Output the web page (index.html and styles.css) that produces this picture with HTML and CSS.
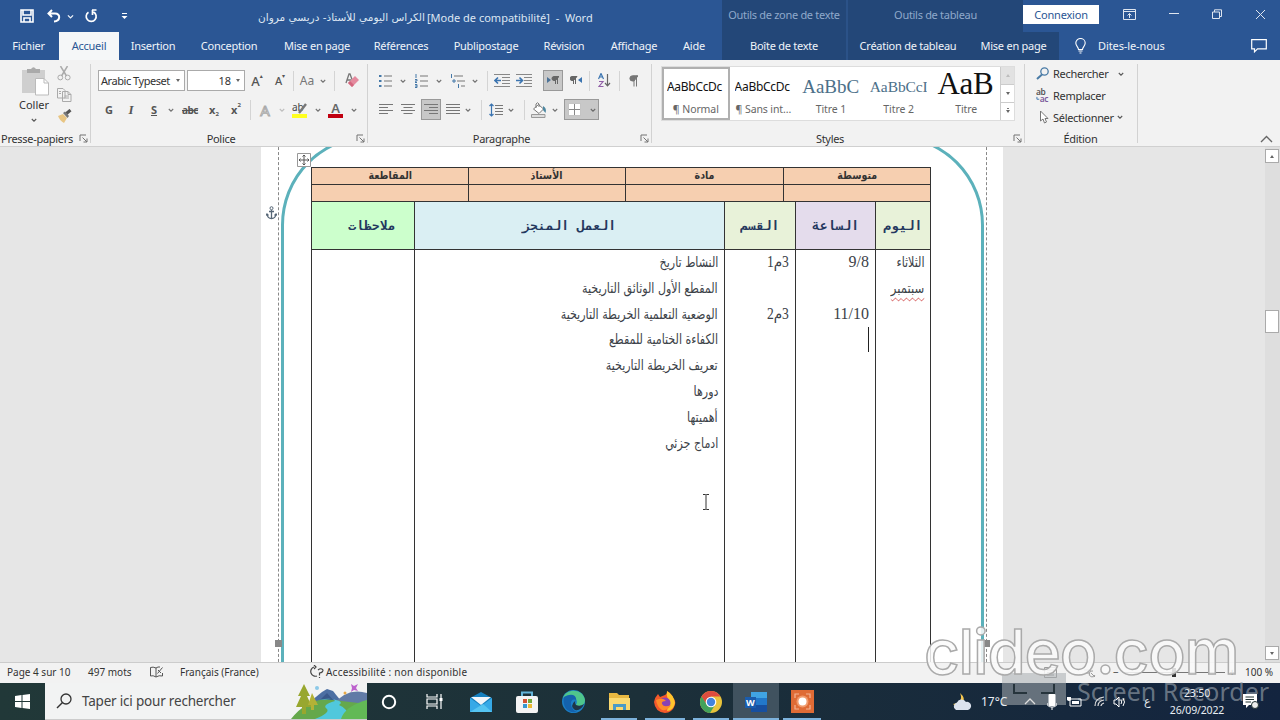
FILE: index.html
```html
<!DOCTYPE html>
<html lang="fr">
<head>
    <meta charset="UTF-8">
    <title>الكراس اليومي للأستاذ - Word</title>
    <link rel="stylesheet" href="styles.css">
</head>
<body>
    <svg width="0" height="0" class="defs">
        <symbol id="chev" viewBox="0 0 6 6"><path d="M.8 2 3 4.200 5.200 2" fill="none" stroke="currentColor" stroke-width="1.100"/></symbol>
        <symbol id="launch" viewBox="0 0 9 9"><path d="M1 7V1H7M3.500 3.500 8 8M8 4.500V8H4.500" fill="none" stroke="currentColor"/></symbol>
    </svg>

    <div class="header">
        <div class="title-row">
            <div class="quick">
                <svg class="save" width="14" height="14" viewBox="0 0 14 14"><path d="M1 1H13V13H1ZM3 1V6H11V1M4 13V9H10V13" fill="none" stroke="#fff" stroke-width="1.600"/></svg>
                <svg class="undo" width="14" height="14" viewBox="0 0 14 14"><path d="M5 1 1.500 4.500 5 8M2 4.500H8C14 4.500 13.500 12 7 12.500" fill="none" stroke="#fff" stroke-width="2"/></svg>
                <svg class="undo-more" width="7" height="7"><use href="#chev"/></svg>
                <svg class="redo" width="14" height="14" viewBox="0 0 14 14"><path d="M4.500 3.200A5 5 0 1 0 9.500 3M8 1H12.500M8.500 1V6" fill="none" stroke="#fff" stroke-width="1.700"/></svg>
                <svg class="more" width="7" height="9" viewBox="0 0 7 9"><path d="M1 1.500H6" stroke="#fff"/><path d="M.5 4H6.500L3.500 7Z" fill="#fff"/></svg>
            </div>
            <div class="doc-title"><span class="title-ar" dir="rtl">الكراس اليومي للأستاذ- دريسي مروان</span><span class="title-fr">[Mode de compatibilité]&nbsp; -&nbsp; Word</span></div>
            <div class="tools tools-text">Outils de zone de texte</div>
            <div class="tools tools-table">Outils de tableau</div>
            <div class="login">Connexion</div>
            <div class="win">
                <svg width="13" height="11" viewBox="0 0 13 11"><path d="M.5.500H12.500V10.500H.5ZM.5 2.500H12.500M6.500 9V4.500M4.500 6.500 6.500 4.500 8.500 6.500" fill="none" stroke="#fff"/></svg>
                <svg width="10" height="10" viewBox="0 0 10 10"><path d="M0 4.500H10" stroke="#fff"/></svg>
                <svg width="10" height="10" viewBox="0 0 10 10"><path d="M.5 3H7.500V9.500H.5ZM2.500 3V.8H9.500V7.500H7.500" fill="none" stroke="#fff"/></svg>
                <svg width="11" height="11" viewBox="0 0 11 11"><path d="M1 1 10 10M10 1 1 10" stroke="#fff"/></svg>
            </div>
        </div>
        <div class="tabs">
            <div class="tab w57">Fichier</div>
            <div class="tab active w60">Accueil</div>
            <div class="tab w68">Insertion</div>
            <div class="tab w84">Conception</div>
            <div class="tab w92">Mise en page</div>
            <div class="tab w76">Références</div>
            <div class="tab w94">Publipostage</div>
            <div class="tab w62">Révision</div>
            <div class="tab w78">Affichage</div>
            <div class="tab w42">Aide</div>
            <div class="tab dark zone">Boîte de texte</div>
            <div class="tab dark w120">Création de tableau</div>
            <div class="tab dark w91">Mise en page</div>
            <svg class="bulb" width="11" height="16" viewBox="0 0 11 16"><path d="M3.500 11.500C3.500 9 .8 8 .8 5A4.700 4.500 0 0 1 10.200 5C10.200 8 7.500 9 7.500 11.500ZM3.500 13H7.500M4.500 15H6.500" fill="none" stroke="#fff" stroke-width="1.100"/></svg>
            <div class="tell">Dites-le-nous</div>
            <svg class="comment" width="16" height="14" viewBox="0 0 16 14"><path d="M.7.700H15.300V9.800H6.500L3.500 12.800V9.800H.7Z" fill="none" stroke="#fff" stroke-width="1.200"/></svg>
        </div>
    </div>

    <div class="ribbon">
        <div class="group g-clip">
            <div class="group-body">
                <div class="paste">
                    <svg width="28" height="29" viewBox="0 0 28 29"><path d="M0 3H23V26H0Z" fill="#cfcfcf"/><path d="M5 2H9Q11.500-1.500 14 2H18V6H5Z" fill="#aaa"/><path d="M13.500 11.500H22L26.500 16V28H13.500Z" fill="#fff" stroke="#bbb"/><path d="M22 11.500V16H26.500" fill="none" stroke="#bbb"/></svg>
                    <span>Coller</span>
                    <svg width="6" height="6"><use href="#chev"/></svg>
                </div>
                <div class="clip-tools">
                    <svg width="14" height="15" viewBox="0 0 14 15"><path d="M3.500 0 9.500 10M10.500 0 4.500 10" fill="none" stroke="#aaa" stroke-width="1.500"/><circle cx="3.300" cy="11.500" r="2.400" fill="none" stroke="#aaa"/><circle cx="10.700" cy="11.500" r="2.400" fill="none" stroke="#aaa"/></svg>
                    <svg width="15" height="14" viewBox="0 0 15 14"><path d="M.5.500H6L8 2.500V10H.5ZM5.500 3.500H11L14 6.500V13.500H5.500ZM2 3.500H4M2 5.500H4M7.500 8H12M7.500 10H12M11 3.500V6.500H14" fill="#f3f3f3" stroke="#aaa"/></svg>
                    <svg width="15" height="14" viewBox="0 0 15 14"><path d="M1 7 6 5 10 9 7 14Q3 12 1 7Z" fill="#e8c583"/><path d="M6 4 8 2.500 12 7 10.500 9Z" fill="#777"/><path d="M9.500 4.500 13.500 1" stroke="#555" stroke-width="3"/></svg>
                </div>
            </div>
            <div class="label">Presse-papiers</div>
            <svg class="launch" width="9" height="9"><use href="#launch"/></svg>
        </div>

        <div class="group g-font">
            <div class="group-body rows">
                <div class="row">
                    <div class="combo name"><span>Arabic Typeset</span><i></i></div>
                    <div class="combo size"><span>18</span><i></i></div>
                    <div class="cell w24 grow">A<sup>▴</sup></div>
                    <div class="cell w22 grow small">A<sup>▾</sup></div>
                    <div class="sep w4"></div>
                    <div class="cell w24 aa">Aa</div>
                    <div class="cell w8"><svg width="6" height="6"><use href="#chev"/></svg></div>
                    <div class="sep w14"></div>
                    <div class="cell w22"><svg width="14" height="15" viewBox="0 0 14 15"><path d="M1 10 4 1H5L8 9M2.500 7H6" fill="none" stroke="#777" stroke-width="1.300"/><path d="M3 10 10 3 14 7 7 14Z" fill="#e48a9e"/><path d="M3 10 5 8 9 12 7 14Z" fill="#d3667e"/></svg></div>
                </div>
                <div class="row second">
                    <div class="cell w22 b">G</div>
                    <div class="cell w22 it">I</div>
                    <div class="cell w24 b un">S</div>
                    <div class="cell w10"><svg width="6" height="6"><use href="#chev"/></svg></div>
                    <div class="cell w28 st">abc</div>
                    <div class="cell w20 b">x<sub>2</sub></div>
                    <div class="cell w24 b">x<sup>2</sup></div>
                    <div class="sep w4"></div>
                    <div class="cell w26 outline">A</div>
                    <div class="cell w8 faded"><svg width="6" height="6"><use href="#chev"/></svg></div>
                    <div class="cell w28"><svg width="16" height="16" viewBox="0 0 16 16"><path d="M0 12H15V16H0Z" fill="#ffff20"/><text x="0" y="9" font-size="10" fill="#444">ab</text><path d="M14 2 7 11" stroke="#777" stroke-width="2.400"/></svg></div>
                    <div class="cell w8"><svg width="6" height="6"><use href="#chev"/></svg></div>
                    <div class="cell w28"><svg width="16" height="16" viewBox="0 0 16 16"><path d="M0 12H15V16H0Z" fill="#c00010"/><text x="3.300" y="10.500" font-size="13" font-weight="600" fill="#666">A</text></svg></div>
                    <div class="cell w8"><svg width="6" height="6"><use href="#chev"/></svg></div>
                </div>
            </div>
            <div class="label">Police</div>
            <svg class="launch" width="9" height="9"><use href="#launch"/></svg>
        </div>

        <div class="group g-para">
            <div class="group-body rows">
                <div class="row">
                    <div class="cell w22"><svg width="14" height="14" viewBox="0 0 14 14"><path d="M5 2H13M5 7H13M5 12H13" stroke="#777"/><path d="M0 2H2.500M0 7H2.500M0 12H2.500" stroke="#4478a8" stroke-width="2.200"/></svg></div>
                    <div class="cell w12"><svg width="6" height="6"><use href="#chev"/></svg></div>
                    <div class="cell w26"><svg width="14" height="14" viewBox="0 0 14 14"><path d="M5 2H13M5 7H13M5 12H13" stroke="#777"/><path d="M1 0V4M0 5.500H2V7H0V8.500H2M0 10.500H2V13.500H0M0 12H2" fill="none" stroke="#4478a8"/></svg></div>
                    <div class="cell w8"><svg width="6" height="6"><use href="#chev"/></svg></div>
                    <div class="cell w30"><svg width="16" height="14" viewBox="0 0 16 14"><path d="M4 2H13M7 7H15M11 12H15" stroke="#777"/><path d="M1.500 0V4M3 6H5V8H3ZM8.500 10V14" fill="none" stroke="#4478a8"/></svg></div>
                    <div class="cell w4"><svg width="6" height="6"><use href="#chev"/></svg></div>
                    <div class="sep w20"></div>
                    <div class="cell w10"><svg width="16" height="13" viewBox="0 0 16 13"><path d="M0 .5H16M8 3.500H16M8 6.500H16M8 9.500H16M0 12.500H16" stroke="#888"/><path d="M7 6.500H1M4 3.500 1 6.500 4 9.500" fill="none" stroke="#3b74b0" stroke-width="1.600"/></svg></div>
                    <div class="cell w34"><svg width="16" height="13" viewBox="0 0 16 13"><path d="M0 .5H16M8 3.500H16M8 6.500H16M8 9.500H16M0 12.500H16" stroke="#888"/><path d="M0 6.500H6M3.500 3.500 6.500 6.500 3.500 9.500" fill="none" stroke="#3b74b0" stroke-width="1.600"/></svg></div>
                    <div class="cell w20 pressed dir"><svg width="12" height="9" viewBox="0 0 12 9"><path d="M0 1 4 4 0 7Z" fill="#4d7397"/><path d="M8.500 8V.5M10.500 8V.5M12 .5H7A2 2 0 0 0 7 4.500H8.500Z" fill="#666" stroke="#666"/></svg></div>
                    <div class="cell w24"><svg width="12" height="9" viewBox="0 0 12 9"><path d="M12 1 8 4 12 7Z" fill="#3b74b0"/><path d="M3.500 8V.5M5.500 8V.5M7 .5H2A2 2 0 0 0 2 4.500H3.500Z" fill="#666" stroke="#666"/></svg></div>
                    <div class="sep w2"></div>
                    <div class="cell w28"><svg width="13" height="15" viewBox="0 0 13 15"><path d="M.5 6 3 .5 5.500 6M1.500 4H4.500" fill="none" stroke="#3b74b0" stroke-width="1.200"/><path d="M1 8.500H5L1 13.500H5.500" fill="none" stroke="#9260a8" stroke-width="1.200"/><path d="M9.500 1V12.500M7 10 9.500 12.800 12 10" fill="none" stroke="#666" stroke-width="1.200"/></svg></div>
                    <div class="sep w2"></div>
                    <div class="cell w26"><svg width="9" height="12" viewBox="0 0 9 12"><path d="M5 11.500V.8M7.500 11.500V.8M9 .8H3.500A2.500 2.500 0 0 0 3.500 6H5Z" fill="#777" stroke="#777"/></svg></div>
                </div>
                <div class="row second">
                    <div class="cell w22"><svg width="14" height="11" viewBox="0 0 14 11"><path d="M0 .5H14M0 3.500H9M0 6.500H14M0 9.500H9" stroke="#777"/></svg></div>
                    <div class="cell w22"><svg width="14" height="11" viewBox="0 0 14 11"><path d="M0 .5H14M2.500 3.500H11.500M0 6.500H14M2.500 9.500H11.500" stroke="#777"/></svg></div>
                    <div class="cell w20 pressed right"><svg width="14" height="11" viewBox="0 0 14 11"><path d="M0 .5H14M5 3.500H14M0 6.500H14M5 9.500H14" stroke="#777"/></svg></div>
                    <div class="cell w24"><svg width="14" height="11" viewBox="0 0 14 11"><path d="M0 .5H14M0 3.500H14M0 6.500H14M0 9.500H14" stroke="#777"/></svg></div>
                    <div class="cell w6"><svg width="6" height="6"><use href="#chev"/></svg></div>
                    <div class="sep w20"></div>
                    <div class="cell w10"><svg width="14" height="14" viewBox="0 0 14 14"><path d="M6 2.500H14M6 5.500H14M6 8.500H14M6 11.500H14" stroke="#777"/><path d="M2.500 1V13M.5 3 2.500 1 4.500 3M.5 11 2.500 13 4.500 11" fill="none" stroke="#3b74b0" stroke-width="1.200"/></svg></div>
                    <div class="cell w20"><svg width="6" height="6"><use href="#chev"/></svg></div>
                    <div class="sep w6"></div>
                    <div class="cell w24"><svg width="16" height="16" viewBox="0 0 16 16"><path d="M.5 12.500H14V15.500H.5Z" fill="#ddd" stroke="#999"/><path d="M2.500 7 7.500 2.500 12.500 7 8 11.500ZM5 6V2Q6.500-.5 8 2V5" fill="#fff" stroke="#777"/><path d="M12 4Q16 6 14.500 11L12 8Z" fill="#4c86a0"/></svg></div>
                    <div class="cell w8"><svg width="6" height="6"><use href="#chev"/></svg></div>
                    <div class="cell pressed borders"><svg width="13" height="13" viewBox="0 0 13 13"><path d="M0 0H13V13H0Z" fill="#fff"/><path d="M.5.500H12.500V12.500H.5Z" fill="none" stroke="#888" stroke-dasharray="1 1"/><path d="M6.500 1V12M1 6.500H12" stroke="#888"/></svg><svg width="6" height="6"><use href="#chev"/></svg></div>
                </div>
            </div>
            <div class="label">Paragraphe</div>
            <svg class="launch" width="9" height="9"><use href="#launch"/></svg>
        </div>

        <div class="group g-styles">
            <div class="group-body">
                <div class="gallery">
                    <div class="style selected"><div class="sample">AaBbCcDc</div><div class="name">¶ Normal</div></div>
                    <div class="style"><div class="sample">AaBbCcDc</div><div class="name">¶ Sans int...</div></div>
                    <div class="style"><div class="sample t1">AaBbC</div><div class="name">Titre 1</div></div>
                    <div class="style"><div class="sample t2">AaBbCcI</div><div class="name">Titre 2</div></div>
                    <div class="style"><div class="sample t3">AaB</div><div class="name">Titre</div></div>
                    <div class="gallery-nav"><div class="off"><i class="up"></i></div><div><i></i></div><div><i class="line"></i></div></div>
                </div>
            </div>
            <div class="label">Styles</div>
            <svg class="launch" width="9" height="9"><use href="#launch"/></svg>
        </div>

        <div class="group g-edit">
            <div class="group-body edits">
                <div class="edit"><svg width="14" height="13" viewBox="0 0 14 13"><circle cx="8.500" cy="4.500" r="3.700" fill="none" stroke="#4a7ba6" stroke-width="1.300"/><path d="M6 7.500 1 12" stroke="#4a7ba6" stroke-width="2"/></svg><span>Rechercher</span><svg class="far" width="6" height="6"><use href="#chev"/></svg></div>
                <div class="edit"><svg width="15" height="15" viewBox="0 0 15 15"><text x="0" y="7" font-size="9" font-weight="600" fill="#555">ab</text><text x="4" y="14" font-size="9" font-weight="600" fill="#7b5a9b">ac</text><path d="M1 9V11.500H3.500" fill="none" stroke="#3b74b0"/></svg><span>Remplacer</span></div>
                <div class="edit"><svg width="14" height="14" viewBox="0 0 14 14"><path d="M4.500 1V11L7 9 8.500 13 10.500 12 9 8.500H12Z" fill="#fff" stroke="#777"/></svg><span>Sélectionner</span><svg width="6" height="6"><use href="#chev"/></svg></div>
            </div>
            <div class="label">Édition</div>
        </div>
        <svg class="collapse" width="13" height="8" viewBox="0 0 13 8"><path d="M1 7 6.500 1.500 12 7" fill="none" stroke="#666" stroke-width="1.400"/></svg>
    </div>

    <div class="workspace">
        <div class="page">
            <div class="textbox"></div>
            <div class="frame"></div>
            <div class="handle left"></div>
            <div class="handle right"></div>
            <svg class="anchor" width="11" height="14" viewBox="0 0 11 14"><circle cx="5.500" cy="2.200" r="1.500" fill="none" stroke="#566676"/><path d="M5.500 4V12.500M3 5.500H8M1 8Q1.500 12.500 5.500 12.500 9.500 12.500 10 8M0 9.500 1 8 2.500 9.500M8.500 9.500 10 8 11 9.500" fill="none" stroke="#566676" stroke-width="1.300"/></svg>
            <svg class="move" width="14" height="14" viewBox="0 0 14 14"><path d="M.5.500H13.500V13.500H.5Z" fill="#fff" stroke="#999"/><path d="M7 2V12M2 7H12M5.500 3.500 7 2 8.500 3.500M5.500 10.500 7 12 8.500 10.500M3.500 5.500 2 7 3.500 8.500M10.500 5.500 12 7 10.500 8.500" fill="none" stroke="#555"/></svg>

            <div class="sheet" dir="rtl">
                <div class="info">
                    <div><span>متوسطة</span></div><div><span>مادة</span></div><div><span>الأستاذ</span></div><div><span>المقاطعة</span></div>
                    <div></div><div></div><div></div><div></div>
                </div>
                <div class="plan heads">
                    <div class="lime"><span>اليوم</span></div>
                    <div class="violet"><span>الساعة</span></div>
                    <div class="lime"><span>القسم</span></div>
                    <div class="sky"><span>العمل المنجز</span></div>
                    <div class="mint"><span>ملاحظات</span></div>
                </div>
                <div class="plan lines">
                    <div>
                        <p><span>الثلاثاء</span></p>
                        <p><span class="typo">سبتمبر</span></p>
                    </div>
                    <div class="hours">
                        <p>9/8</p>
                        <p></p>
                        <p>11/10</p>
                        <p><i class="caret"></i></p>
                    </div>
                    <div class="class">
                        <p><span>3م1</span></p>
                        <p></p>
                        <p><span>3م2</span></p>
                    </div>
                    <div class="work">
                        <p><span>النشاط تاريخ</span></p>
                        <p><span>المقطع الأول الوثائق التاريخية</span></p>
                        <p><span>الوضعية التعلمية الخريطة التاريخية</span></p>
                        <p><span>الكفاءة الختامية للمقطع</span></p>
                        <p><span>تعريف الخريطة التاريخية</span></p>
                        <p><span>دورها</span></p>
                        <p><span>أهميتها</span></p>
                        <p><span>ادماج جزئي</span></p>
                    </div>
                    <div></div>
                </div>
            </div>
            <svg class="ibeam" width="8" height="16" viewBox="0 0 8 16"><path d="M1 .5H3.500L4 1 4.500.500H7M4 1V15M1 15.500H3.500L4 15 4.500 15.500H7" fill="none" stroke="#333"/></svg>
        </div>
        <div class="scrollbar">
            <div class="arrow"><i class="up"></i></div>
            <div class="thumb"></div>
            <div class="arrow"><i></i></div>
        </div>
    </div>

    <div class="status">
        <span class="s-page">Page 4 sur 10</span>
        <span class="s-words">497 mots</span>
        <svg class="s-book" width="14" height="12" viewBox="0 0 14 12"><path d="M6 2Q3 .5.500 1.500V10Q3 9 6 11ZM6 2Q8 .5 10 1M6 11Q9 9 12.500 10V7M7.500 7.500 12.500 1.500M8 4 11 7" fill="none" stroke="#555"/></svg>
        <span class="s-lang">Français (France)</span>
        <svg class="s-acc" width="16" height="14" viewBox="0 0 16 14"><path d="M5 2A4.500 4.500 0 1 0 8 11M5 0 7 2 5 4M9 5Q12 2.500 14 5 14 7.500 10.500 8V10.500M10.500 12V13" fill="none" stroke="#444" stroke-width="1.200"/></svg>
        <span class="s-access">Accessibilité : non disponible</span>
        <div class="views">
            <svg width="13" height="11" viewBox="0 0 13 11"><path d="M.5.500H12.500V10.500H.5ZM3 3H10M3 5.500H10M3 8H10" fill="none" stroke="#777"/></svg>
            <svg width="13" height="11" viewBox="0 0 13 11"><path d="M1 3H8M1 6H6M8 6 12 10M10 4A3 3 0 1 0 12 8" fill="none" stroke="#777"/></svg>
        </div>
        <div class="zoom"><span>−</span><div class="track"><i></i></div><span>+</span></div>
        <span class="percent">100 %</span>
    </div>

    <div class="taskbar">
        <div class="start"><svg width="15" height="15" viewBox="0 0 15 15"><path d="M0 2 6.500 1V7H0ZM7.500.900 15 0V7H7.500ZM0 8H6.500V14L0 13ZM7.500 8H15V15L7.500 14.100Z" fill="#fff"/></svg></div>
        <div class="search">
            <svg class="glass" width="16" height="16" viewBox="0 0 16 16"><circle cx="10" cy="6" r="5" fill="none" stroke="#333" stroke-width="1.300"/><path d="M6.500 9.500 1 15" stroke="#333" stroke-width="1.500"/></svg>
            <span>Taper ici pour rechercher</span>
            <svg class="scene" width="76" height="36" viewBox="0 0 76 36">
                <path d="M20 18 31 9 36 6 42 8 50 18Z" fill="#4c6fa3"/><path d="M28 18 36 10 43 18Z" fill="#39588b"/>
                <path d="M42 22Q56 4 76 10V36H34Z" fill="#617ba6"/><path d="M0 36Q18 13 42 17L76 21V36Z" fill="#65a84c"/>
                <path d="M28 17Q42 14 44 18 30 22 36 26 39 30 24 36H60Q56 25 48 22 54 18 40 16Z" fill="#50c8dc"/>
                <path d="M50 36Q54 23 76 17V36Z" fill="#62b956"/>
                <path d="M13 1 7 13H10L5 24H11V31H15V24H21L16 13H19Z" fill="#98a72f"/><path d="M21 10 17 22H20V27H23V22H27Z" fill="#b3b236"/>
                <path d="M60 1 63 3 67 1 65 5 67 8 63 7 60 9 61 5Z" fill="#bd62cd"/><circle cx="26" cy="5" r="2" fill="#8cc9e8"/><circle cx="54" cy="10" r="1.500" fill="#e8aa46"/>
            </svg>
        </div>
        <div class="apps">
            <div class="app w44"><svg width="16" height="16" viewBox="0 0 16 16"><circle cx="8" cy="8" r="6.200" fill="none" stroke="#fff" stroke-width="2"/></svg></div>
            <div class="app w46"><svg width="17" height="15" viewBox="0 0 17 15"><path d="M1 0V3H11V0M1 5H11V10H1ZM1 15V12H11V15M15 0V15" fill="none" stroke="#fff" stroke-width="1.200"/><path d="M13.500 4H16.500V7H13.500Z" fill="#fff"/></svg></div>
            <div class="app w48"><svg width="24" height="20" viewBox="0 0 24 20"><path d="M1 6 12 0 23 6V20H1Z" fill="#1680bf"/><path d="M2 5H22L12 13Z" fill="#f3f6fa"/><path d="M1 6 12 14 23 6V20H1Z" fill="#36a9e7"/><path d="M1 20 14 12 23 20Z" fill="#55c4f1"/></svg></div>
            <div class="app w44"><svg width="22" height="22" viewBox="0 0 22 22"><path d="M6 5V1.500H16V5" fill="none" stroke="#63b4d9" stroke-width="2"/><rect y="5" width="22" height="17" rx="2" fill="#f4f4f4"/><path d="M7 8H11V12H7Z" fill="#d35332"/><path d="M12 8H16V12H12Z" fill="#71a93b"/><path d="M7 13H11V17H7Z" fill="#3797cf"/><path d="M12 13H16V17H12Z" fill="#edba32"/></svg></div>
            <div class="app w48"><svg width="23" height="23" viewBox="0 0 23 23"><circle cx="11.500" cy="11.500" r="11.500" fill="#1b7fc6"/><path d="M1 8C4-2 21-2 23 10 23 17 15 17 14 15 18 8 8 3 1 8Z" fill="#4fc58c"/><path d="M2 7C10 2 15 6 14 10 7 7 7 19 15 22 5 24 0 16 2 7Z" fill="#1462ad"/><path d="M14 10Q12 12 14 15 18 17 22 14 19 21 13 20 7 16 14 10Z" fill="#1f3647"/></svg></div>
            <div class="app open w44"><svg width="21" height="19" viewBox="0 0 21 19"><path d="M0 1H8L10 3H20V18H0Z" fill="#e8b841"/><path d="M0 6H21V18H0Z" fill="#fad970"/><path d="M4 18V12H17V18H14V15H7V18Z" fill="#4a9bc6"/></svg></div>
            <div class="app open w48"><svg width="22" height="22" viewBox="0 0 22 22"><path d="M11 4Q14 2 13 0 18 3 19 7 22 9 21 14 18 22 11 22 1 21 0 11 1 6 4 3L6 6Z" fill="#f4592b"/><path d="M13 0Q20 4 21 12 19 20 13 20L15 9Q12 6 13 0Z" fill="#ffc52d"/><circle cx="11" cy="12" r="5.500" fill="#8a43b4"/><path d="M2 9Q9 6 12 10 7 10 8 13 10 17 17 14 14 20 8 19 3 16 2 9Z" fill="#ff8b2a"/></svg></div>
            <div class="app open w44"><svg width="22" height="22" viewBox="0 0 22 22"><circle cx="11" cy="11" r="11" fill="#e8c33b"/><path d="M1.500 5.500A11 11 0 0 1 20.500 5.500H11L6 13Z" fill="#dd4c3f"/><path d="M1.500 5.500A11 11 0 0 0 10 22L15 14 6.500 13Z" fill="#42a25b"/><circle cx="11" cy="11" r="5.300" fill="#fff"/><circle cx="11" cy="11" r="4.200" fill="#4283dc"/></svg></div>
            <div class="app open current w46"><svg width="22" height="20" viewBox="0 0 22 20"><path d="M6 0H22V6H6Z" fill="#40a4e3"/><path d="M6 6H22V13H6Z" fill="#2278ca"/><path d="M6 13H22V20H6Z" fill="#174f9f"/><path d="M0 5H11V16H0Z" fill="#1a5cad"/><text x="1" y="14" font-size="9" font-weight="700" fill="#fff">W</text></svg></div>
            <div class="app open w46"><svg width="23" height="23" viewBox="0 0 23 23"><path d="M0 0H23V23H0Z" fill="#df6b35"/><path d="M4 8V4H8M15 4H19V8M19 15V19H15M8 19H4V15" fill="none" stroke="#f3b394" stroke-width="1.200"/><circle cx="11.500" cy="11.500" r="6" fill="#f19b6d"/><circle cx="11.500" cy="11.500" r="4" fill="#fff"/></svg></div>
        </div>
        <div class="tray">
            <svg class="weather" width="20" height="18" viewBox="0 0 20 18"><path d="M8 0Q12 9 1 11 5 15 11 11 14 5 8 0Z" fill="#f5c64d"/><path d="M4 17A4 4 0 0 1 5 9.500 5 5 0 0 1 14 9 4 4 0 0 1 16 17Z" fill="#dce3ef"/></svg>
            <span class="temp">17°C</span>
            <svg class="t-up" width="12" height="7" viewBox="0 0 12 7"><path d="M1 6 6 1 11 6" fill="none" stroke="#ddd" stroke-width="1.300"/></svg>
            <svg class="t-mic" width="10" height="16" viewBox="0 0 10 16"><rect x="1.500" width="7" height="12" rx="1" fill="#fff"/><path d="M0 9Q0 13 5 13 10 13 10 9M5 13V16" fill="none" stroke="#fff"/></svg>
            <svg class="t-bat" width="15" height="11" viewBox="0 0 15 11"><path d="M3 3H14V10H3Z" fill="none" stroke="#fff"/><path d="M5 5H12V8H5Z" fill="#fff"/><path d="M0 1H4V4Q2 6 0 4Z" fill="#fff"/></svg>
            <svg class="t-wifi" width="11" height="11" viewBox="0 0 11 11"><path d="M1 10Q1 2 10 1M4 10Q4 5 10 4M7 10Q7 8 10 7" fill="none" stroke="#ddd" stroke-width="1.200"/></svg>
            <svg class="t-vol" width="13" height="12" viewBox="0 0 13 12"><path d="M1 4H3L6 1V11L3 8H1ZM8 4Q9.500 6 8 8M10 2Q13 6 10 10" fill="none" stroke="#fff"/></svg>
            <span class="t-lang">ع</span>
            <div class="clock"><span>23:50</span><span>26/09/2022</span></div>
            <svg class="t-note" width="16" height="15" viewBox="0 0 16 15"><path d="M0 0H14V11H6L3 14V11H0Z" fill="#fff"/><path d="M2.500 3H11M2.500 5.500H11M2.500 8H8" stroke="#233"/><circle cx="12" cy="11" r="3.500" fill="#eee" stroke="#233"/></svg>
        </div>
    </div>

    <div class="recorder">
        <svg width="64" height="32" viewBox="0 0 64 32"><path d="M0 0H64V32H0Z" fill="#a8adb0" fill-opacity=".55"/><path d="M12 11V20H25M39 20H52V11" fill="none" stroke="#26343c" stroke-width="2"/></svg>
        <span>Screen Recorder</span>
    </div>
    <div class="clideo">clideo.com</div>
</body>
</html>
```
FILE: styles.css
```css
* {
    box-sizing: border-box;
}

body {
    margin: 0;
    width: 1280px;
    height: 720px;
    overflow: hidden;
    position: relative;
    display: flex;
    flex-direction: column;
    font-family: "Noto Sans", "DejaVu Sans", sans-serif;
    font-size: 11px;
    color: #444;
    white-space: nowrap;
}

svg {
    flex: none;
    display: block;
}

.defs {
    position: absolute;
}

/* widths */
.w2 { width: 2px; }
.w4 { width: 4px; }
.w6 { width: 6px; }
.w8 { width: 8px; }
.w10 { width: 10px; }
.w12 { width: 12px; }
.w14 { width: 14px; }
.w20 { width: 20px; }
.w22 { width: 22px; }
.w24 { width: 24px; }
.w26 { width: 26px; }
.w28 { width: 28px; }
.w30 { width: 30px; }
.w34 { width: 34px; }
.w42 { width: 42px; }
.w44 { width: 44px; }
.w46 { width: 46px; }
.w48 { width: 48px; }
.w57 { width: 57px; margin-right: 2px; }
.w60 { width: 60px; }
.w62 { width: 62px; }
.w68 { width: 68px; }
.w76 { width: 76px; }
.w78 { width: 78px; }
.w84 { width: 84px; }
.w91 { width: 91px; }
.w92 { width: 92px; }
.w94 { width: 94px; }
.w120 { width: 120px; }

/* title bar and tabs */
.header {
    height: 60px;
    flex: none;
    background: #2b5694;
    color: #f0f4f9;
}

.title-row {
    height: 32px;
    display: flex;
}

.quick {
    width: 258px;
    display: flex;
    align-items: center;
    padding-left: 20px;
}

.undo { margin-left: 13px; }
.undo-more { margin-left: 6px; }
.redo { margin-left: 10px; }
.more { margin-left: 23px; }

.doc-title {
    width: 464px;
    display: flex;
    align-items: center;
    padding-top: 2px;
    color: #dde6f2;
}

.title-ar {
    width: 167px;
    font-family: "DejaVu Sans", sans-serif;
    font-size: 10.5px;
}

.title-fr {
    margin-left: 2px;
}

.tools {
    background: #234778;
    color: #8fa9cb;
    line-height: 30px;
    text-align: center;
    letter-spacing: -.3px;
}

.tools-text {
    width: 126px;
    border-right: 2px solid #2b5288;
}

.tools-table {
    width: 175px;
}

.login {
    width: 76px;
    height: 19px;
    margin-top: 5px;
    background: #fff;
    color: #2b5694;
    line-height: 19px;
    text-align: center;
    letter-spacing: -.2px;
}

.win {
    display: flex;
    align-items: center;
    padding: 0 0 4px 24px;
    gap: 33px;
    opacity: .85;
}

.tabs {
    height: 28px;
    display: flex;
    align-items: center;
    letter-spacing: -.25px;
}

.tab {
    height: 28px;
    flex: none;
    line-height: 27px;
    text-align: center;
}

.tab.active {
    background: #f5f7f8;
    color: #2b5694;
}

.tab.dark {
    background: #234778;
}

.tab.zone {
    width: 126px;
    margin-left: 7px;
    border-right: 2px solid #2b5288;
}

.bulb { margin-left: 16px; }
.tell { margin-left: 12px; width: 68px; line-height: 27px; height: 28px; letter-spacing: -.1px; }
.comment { margin-left: 85px; }

/* ribbon */
.ribbon {
    height: 87px;
    flex: none;
    display: flex;
    position: relative;
    background: #f2f2f2;
    border-bottom: 1px solid #d0d0d0;
}

.ribbon use {
    opacity: .8;
}

.group {
    position: relative;
    height: 86px;
    flex: none;
}

.group::after {
    content: "";
    position: absolute;
    right: 0;
    top: 4px;
    height: 79px;
    border-right: 1px solid #d2d2d2;
}

.g-clip { width: 91px; }
.g-font { width: 277px; }
.g-para { width: 284px; }
.g-styles { width: 373px; }
.g-edit { width: 113px; }

.group-body {
    height: 69px;
    display: flex;
}

.group-body.rows {
    display: block;
    padding: 10px 0 0 7px;
}

.label {
    text-align: center;
    line-height: 20px;
    padding-right: 17px;
    color: #333;
    letter-spacing: -.3px;
}

.g-edit .label { padding-right: 2px; }

.launch {
    position: absolute;
    right: 3px;
    bottom: 3px;
    color: #555;
}

.paste {
    width: 38px;
    margin: 7px 0 0 15px;
    display: flex;
    flex-direction: column;
    align-items: center;
    color: #333;
}

.paste span {
    line-height: 18px;
    margin-bottom: 3px;
}

.paste > svg:first-child {
    margin-left: 4px;
}

.clip-tools {
    display: flex;
    flex-direction: column;
    gap: 7px;
    margin: 6px 0 0 4px;
}

.row {
    height: 21px;
    display: flex;
    align-items: center;
}

.row.second {
    margin-top: 8px;
}

.cell {
    flex: none;
    height: 21px;
    display: flex;
    align-items: center;
    justify-content: center;
    color: #555;
}

.sep {
    flex: none;
    height: 20px;
    background: linear-gradient(#d4d4d4, #d4d4d4) center / 1px 100% no-repeat;
}

.combo {
    height: 21px;
    flex: none;
    display: flex;
    align-items: center;
    justify-content: space-between;
    background: #fff;
    border: 1px solid #aaa;
    padding: 0 4px 0 2px;
    color: #333;
}

.combo.name {
    width: 87px;
    margin-right: 2px;
    letter-spacing: -.45px;
}

.combo.size {
    width: 58px;
}

.combo.size span {
    margin-left: auto;
    margin-right: 5px;
}

.combo i, .gallery-nav i, .arrow i {
    border: 2.5px solid transparent;
    border-top: 3px solid #666;
    border-bottom: 0;
}

.grow { font-size: 13px; font-weight: 500; color: #555; }
.grow.small { font-size: 11px; }
.cell sup, .cell sub { font-size: 6px; line-height: 6px; }
.cell sup { align-self: flex-start; margin-top: 3px; }
.cell sub { align-self: flex-end; margin-bottom: 3px; }
.aa { font-size: 12px; color: #777; }
.b { font-weight: 700; }
.it { font: italic 700 13px "Liberation Serif", serif; }
.un { text-decoration: underline; }
.st { font-weight: 700; font-size: 10px; text-decoration: line-through; letter-spacing: -.5px; }
.outline { font-size: 15px; color: #f2f2f2; -webkit-text-stroke: 1px #aaa; }
.faded { opacity: .4; }

.pressed {
    background: #c8c8c8;
    border: 1px solid #999;
}

.pressed.dir { margin: 0 1px 0 2px; }
.pressed.right { margin-left: 2px; }

.borders {
    width: 35px;
    margin-left: 5px;
    gap: 9px;
}

.gallery {
    width: 354px;
    height: 55px;
    margin: 6px 0 0 9px;
    display: flex;
    background: #fff;
    border: 1px solid #ddd;
}

.style {
    width: 67.6px;
    text-align: center;
    padding: 0 5px;
}

.style.selected {
    box-shadow: inset 0 0 0 2px #b0b0b0;
}

.sample {
    height: 34px;
    overflow: hidden;
    line-height: 39px;
    font-size: 12px;
    letter-spacing: -.3px;
    color: #111;
    display: flex;
    justify-content: flex-start;
}

.style .name {
    line-height: 17px;
    font-size: 10.5px;
    letter-spacing: -.1px;
    color: #666;
}

.sample.t1, .sample.t2 {
    font-family: "Liberation Serif", serif;
    color: #4c7089;
    letter-spacing: 0;
}

.sample.t1 { font-size: 19px; }
.sample.t2 { font-size: 15.5px; letter-spacing: -.1px; }

.sample.t3 {
    font: 31px/21px "Liberation Serif", serif;
    margin-top: 6px;
    height: 28px;
}

.gallery-nav {
    width: 14px;
    margin-left: auto;
    border-left: 1px solid #ccc;
    display: flex;
    flex-direction: column;
}

.gallery-nav div {
    flex: 1;
    display: flex;
    align-items: center;
    justify-content: center;
    border-bottom: 1px solid #ccc;
}

.gallery-nav div:last-child { border-bottom: 0; }
.gallery-nav .off { background: #e2e2e2; }
.gallery-nav .line { box-shadow: 0 -3px 0 -1px #777; }

i.up {
    transform: rotate(180deg);
}

.off i { opacity: .3; }

.edits {
    flex-direction: column;
    padding: 3px 0 0 11px;
}

.edit {
    height: 21.7px;
    display: flex;
    align-items: center;
    gap: 3px;
    color: #333;
    letter-spacing: -.3px;
}

.edit svg:first-child { width: 14px; }
.edit .far { margin-left: 7px; }

.collapse {
    position: absolute;
    left: 1260px;
    top: 75px;
}

/* document */
.workspace {
    height: 515px;
    flex: none;
    display: flex;
    justify-content: space-between;
    background: #e6e6e6;
    padding-left: 261px;
}

.page {
    width: 742px;
    height: 515px;
    background: #fff;
    position: relative;
    overflow: hidden;
}

.textbox {
    position: absolute;
    left: 17px;
    top: -10px;
    width: 709px;
    height: 540px;
    border: 1px dashed #888;
}

.frame {
    position: absolute;
    left: 20px;
    top: -12px;
    width: 703px;
    height: 700px;
    border: 3px solid #5cb1bb;
    border-radius: 90px;
}

.handle {
    position: absolute;
    top: 493px;
    width: 7px;
    height: 7px;
    background: #888;
}

.handle.left { left: 14px; }
.handle.right { left: 722px; }

.anchor {
    position: absolute;
    left: 5px;
    top: 59px;
}

.move {
    position: absolute;
    left: 36px;
    top: 6px;
}

.sheet {
    position: relative;
    width: 620px;
    margin: 20px 0 0 50px;
    border: solid #333;
    border-width: 1px 1px 0;
    font-family: "DejaVu Sans", sans-serif;
}

.info {
    display: grid;
    grid-template-columns: 147px 158px 157px 156px;
    grid-template-rows: 17px 17px;
    background: #f6cfb0;
}

.info div {
    border-bottom: 1px solid #333;
    border-left: 1px solid #333;
    text-align: center;
    font-weight: 700;
    font-size: 11px;
    line-height: 15px;
    color: #333;
}

.info span {
    display: inline-block;
    transform: scaleX(.86);
}

.plan {
    display: grid;
    grid-template-columns: 55px 80px 71px 310px 102px;
}

.plan > div {
    border-left: 1px solid #333;
}

.plan > div:last-child, .info div:nth-child(4n) {
    border-left: 0;
}

.heads {
    height: 48px;
    border-bottom: 1px solid #333;
    font: 700 12.5px/47px "DejaVu Sans Mono", monospace;
    text-align: center;
    color: #24385e;
}

.heads span {
    display: inline-block;
    transform: scaleX(1.04);
}

.lime { background: #e8f2d9; }
.violet { background: #e4dcec; }
.sky { background: #daeff3; }
.mint { background: #ccffcc; padding-left: 0; padding-right: 0; text-indent: -9px; }

.lines {
    height: 430px;
    font-size: 14px;
    color: #3c4248;
}

.lines > div {
    padding: 0 6px;
}

.lines p {
    height: 25.8px;
    line-height: 24px;
    margin: 0;
}

.lines span {
    display: inline-block;
    transform: scaleX(.79);
    transform-origin: right;
}

.lines .hours {
    font: 16px "Liberation Serif", serif;
}

.lines .class {
    font: 16px "Liberation Serif", "DejaVu Sans", serif;
}

.lines .class span {
    transform: scaleX(.85);
}

.lines .typo {
    transform: scaleX(.83);
    height: 24px;
    text-decoration: underline wavy #d05050 1px;
    text-underline-offset: 4px;
}

.caret {
    display: block;
    width: 1px;
    height: 25px;
    background: #222;
}

.ibeam {
    position: absolute;
    left: 441px;
    top: 347px;
}

.scrollbar {
    width: 15px;
    padding: 2px 0;
    background: #dedede;
    display: flex;
    flex-direction: column;
}

.arrow {
    width: 14px;
    height: 14px;
    background: #fff;
    border: 1px solid #aaa;
    display: flex;
    align-items: center;
    justify-content: center;
}

.thumb {
    width: 14px;
    height: 23px;
    margin-bottom: 313px;
    margin-top: auto;
    background: #fff;
    border: 1px solid #aaa;
}

/* status bar */
.status {
    height: 21px;
    flex: none;
    display: flex;
    align-items: center;
    background: #f2f2f2;
    border-top: 1px solid #ccc;
    font-size: 10px;
    padding: 0 0 2px 7px;
    color: #333;
}

.s-page { width: 81px; }
.s-words { width: 62px; }
.s-lang { margin-left: 16px; width: 129px; }
.s-access { margin-left: 1px; width: 179px; letter-spacing: .22px; }

.views {
    display: flex;
    gap: 26px;
    margin-left: 539px;
    opacity: .7;
}

.zoom {
    width: 122px;
    margin-left: 17px;
    display: flex;
    align-items: center;
    gap: 4px;
}

.track {
    flex: 1;
    border-top: 1px solid #777;
    position: relative;
}

.track i {
    position: absolute;
    left: 49px;
    top: -5px;
    width: 4px;
    height: 9px;
    background: #333;
}

.percent { margin-left: 10px; }

/* taskbar */
.taskbar {
    height: 37px;
    flex: none;
    display: flex;
    background: linear-gradient(90deg, #213838, #1c3039 50%, #13243f);
}

.start {
    width: 45px;
    display: flex;
    align-items: center;
    justify-content: center;
}

.search {
    width: 322px;
    display: flex;
    align-items: center;
    background: #f2f3f3;
    border-bottom: 1px solid #ccc;
    padding-left: 11px;
    font-size: 13.5px;
    letter-spacing: -.2px;
    color: #444;
}

.search span {
    margin-left: 10px;
    width: 209px;
}

.apps {
    display: flex;
}

.app {
    display: flex;
    align-items: center;
    justify-content: center;
    position: relative;
}

.app.open::after {
    content: "";
    position: absolute;
    left: 4px;
    right: 4px;
    bottom: 0;
    height: 2px;
    background: #7db2dc;
}

.app.current { background: #40525f; }
.app.current::after { left: 0; right: 0; }

.tray {
    display: flex;
    align-items: center;
    color: #e8edf2;
    margin-left: 127px;
    position: relative;
    z-index: 1;
}

.temp { margin-left: 9px; font-size: 12px; width: 28px; }
.t-up { margin-left: 15px; }
.t-mic { margin-left: 11px; }
.t-bat { margin-left: 10px; }
.t-wifi { margin-left: 12px; }
.t-vol { margin-left: 8px; }
.t-lang { margin-left: 18px; width: 8px; font-family: "DejaVu Sans", sans-serif; }

.clock {
    width: 56px;
    margin-left: 17px;
    display: flex;
    flex-direction: column;
    align-items: center;
    line-height: 17px;
    font-size: 10.5px;
    letter-spacing: -.15px;
}

.t-note { margin-left: 18px; }

/* watermarks */
.recorder {
    position: absolute;
    left: 1002px;
    top: 673px;
    display: flex;
}

.recorder span {
    margin-left: 11px;
    font-size: 25px;
    line-height: 37px;
    color: rgba(150, 160, 170, .65);
}

.clideo {
    position: absolute;
    left: 924px;
    top: 610px;
    font: 500 62px/84px "Inter", sans-serif;
    letter-spacing: -1.2px;
    color: rgba(250, 250, 250, .85);
    -webkit-text-stroke: 1.5px #aaa;
}
```
